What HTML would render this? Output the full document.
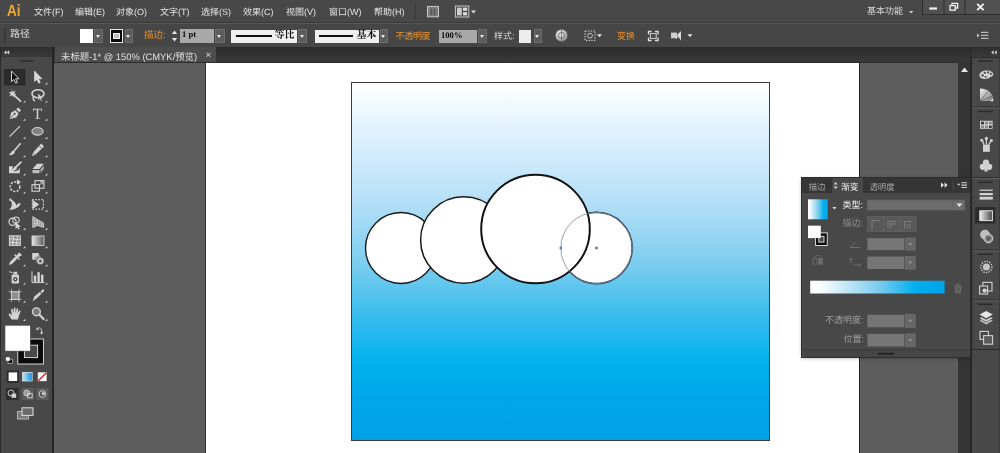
<!DOCTYPE html>
<html lang="zh-CN">
<head>
<meta charset="utf-8">
<title>Illustrator</title>
<style>
*{box-sizing:border-box;margin:0;padding:0}
html,body{width:1000px;height:453px;overflow:hidden;background:#5d5d5d}
body{position:relative;-webkit-font-smoothing:antialiased;text-rendering:geometricPrecision;font-family:"Liberation Sans","Noto Sans CJK SC",sans-serif;font-size:11px;color:#dcdcdc}
.abs{position:absolute}
#menubar,#ctrlbar,#tab,#gpanel,svg{will-change:transform}
#menubar{left:0;top:0;width:1000px;height:22px;background:#484848}
#menubar span.mi{position:absolute;top:5px;font-size:9px;line-height:14px;color:#e4e4e4;white-space:nowrap}
#ctrlbar{left:0;top:22px;width:1000px;height:25px;background:#464646;border-top:1.5px solid #3b3b3b;box-shadow:inset 0 1px 0 #555}
#tabbar{left:0;top:47px;width:1000px;height:15.6px;background:linear-gradient(#2c2c2c,#383838 90%,#262626 100%)}
#tab{left:54.5px;top:47.3px;width:161px;height:15.3px;background:#4d4d4d}
#tab span{position:absolute;left:6px;top:2px;font-size:9.4px;line-height:15px;color:#e0e0e0;white-space:nowrap}
#tab i{position:absolute;left:150.5px;top:2px;font-style:normal;font-size:10px;line-height:14px;color:#ddd}
#toolbar{left:0;top:47px;width:54.2px;height:406px;background:#484848;border-right:2.2px solid #252525}
#toolhead{left:0;top:47px;width:52px;height:10px;background:linear-gradient(#2e2e2e,#3a3a3a)}
#page{left:204.5px;top:62.5px;width:655.7px;height:391px;background:#fff;border-left:1.5px solid #323232;border-right:1.5px solid #222}
#art{left:351px;top:82px;width:419px;height:359px;border:1.5px solid #3c3c3c;background:linear-gradient(#ffffff 0%,rgb(219,240,254) 16%,rgb(181,223,247) 33%,rgb(127,206,239) 50%,rgb(52,187,238) 66.5%,rgb(3,178,238) 77.6%,rgb(0,166,232) 89%,rgb(0,161,232) 100%)}
#vscroll{left:958px;top:62px;width:12px;height:391px;background:#343434}
#dock{left:970px;top:47px;width:30px;height:406px;background:#484848;border-left:2px solid #272727;border-right:1px solid #3a3a3a}
.lbl{position:absolute;white-space:nowrap;font-size:11px;line-height:14px;color:#dcdcdc}
.or{color:#e8922e}
.dd{position:absolute;background:#5c5c5c;border:1px solid #6c6c6c}
.dd:after{content:"";position:absolute;left:50%;top:50%;margin:-1px 0 0 -2.5px;border:2.5px solid transparent;border-top:3px solid #ececec;border-bottom:0}
.inp{position:absolute;background:#a9a9a9;color:#0c0c0c;font-size:8.6px;line-height:11.5px;padding-left:2.5px;white-space:nowrap;font-weight:bold}
.wbox{position:absolute;background:#f0f0f0;color:#111;font-family:"Liberation Serif","Noto Serif CJK SC",serif;font-size:10px;line-height:12px;text-align:right;padding-right:2px;font-weight:700}
.inpd{position:absolute;background:#747474;border:1px solid #555}
#gpanel{left:802px;top:177.5px;width:168px;height:179px;background:#484848;box-shadow:0 0 0 1px #2e2e2e, 0 1px 4px rgba(0,0,0,.35)}
.pl{position:absolute;white-space:nowrap;font-size:9px;line-height:13px}
#gtabs{left:0;top:0;width:168px;height:14.5px;background:#353535}
</style>
</head>
<body>
<!-- canvas -->
<div class="abs" id="page"></div>
<div class="abs" id="art"></div>
<svg class="abs" style="left:0;top:0" width="1000" height="453" viewBox="0 0 1000 453">
  <circle cx="596.5" cy="248" r="35.7" fill="#fff" stroke="#1e2a3e" stroke-width="1.5"/>
  <circle cx="401" cy="248" r="35.5" fill="#fff" stroke="#1a1a1a" stroke-width="1.4"/>
  <circle cx="463.8" cy="240" r="43.2" fill="#fff" stroke="#1a1a1a" stroke-width="1.5"/>
  <circle cx="535.5" cy="229" r="54.3" fill="#fff" stroke="#111" stroke-width="2"/>
  <circle cx="596.5" cy="248" r="35.7" fill="none" stroke="#808a9c" stroke-width="0.8"/>
  <g fill="#5f7cab">
    <rect x="595.2" y="246.7" width="2.6" height="2.6" fill="#66758f"/>
    <rect x="559.6" y="246.7" width="2.5" height="2.6"/>
    <rect x="631" y="246.7" width="2.5" height="2.6"/>
    <rect x="595.2" y="211" width="2.6" height="2.5"/>
    <rect x="595.2" y="282.5" width="2.6" height="2.5"/>
  </g>
</svg>

<!-- top bars -->
<div class="abs" id="menubar">
  <span class="abs" style="left:7px;top:1.5px;font-size:16.5px;line-height:18px;font-weight:bold;color:#e9a838;transform:scaleX(0.82);transform-origin:0 0">Ai</span>
  <span class="mi" style="left:34px">文件(F)</span>
  <span class="mi" style="left:75px">编辑(E)</span>
  <span class="mi" style="left:116px">对象(O)</span>
  <span class="mi" style="left:160px">文字(T)</span>
  <span class="mi" style="left:201px">选择(S)</span>
  <span class="mi" style="left:243px">效果(C)</span>
  <span class="mi" style="left:286px">视图(V)</span>
  <span class="mi" style="left:329px">窗口(W)</span>
  <span class="mi" style="left:374px">帮助(H)</span>
  <div class="abs" style="left:415px;top:3px;width:1px;height:16px;background:#3a3a3a"></div>
  <svg class="abs" style="left:424px;top:4px" width="54" height="16" viewBox="0 0 54 16">
    <rect x="3.5" y="2.4" width="11" height="10.4" fill="#7c7c7c" stroke="#c6c6c6" stroke-width="1"/>
    <path d="M7.4,4.6 L7.4,11 M10.6,4.6 L10.6,11" stroke="#555" stroke-width="1.6"/>
    <rect x="31.4" y="2" width="13.4" height="11" fill="#484848" stroke="#c8c8c8" stroke-width="1"/>
    <rect x="33" y="3.6" width="4.8" height="7.8" fill="#cdcdcd"/>
    <rect x="39" y="3.6" width="4.2" height="3.2" fill="#dedede"/><rect x="39" y="8.2" width="4.2" height="3.2" fill="#dedede"/>
    <path d="M47,6.4 l5,0 l-2.5,3 z" fill="#dcdcdc"/>
  </svg>
  <span class="mi" style="left:867px;top:4px;color:#d6d6d6">基本功能</span>
  <svg class="abs" style="left:906px;top:0" width="94" height="22" viewBox="0 0 94 22">
    <path d="M3,11 l4.4,0 l-2.2,2.6 z" fill="#cfcfcf"/>
    <rect x="16.5" y="-1" width="78" height="15.5" fill="#505050" stroke="#2e2e2e" stroke-width="1"/>
    <path d="M38,0 L38,14.5 M59,0 L59,14.5" stroke="#2e2e2e" stroke-width="1"/>
    <rect x="23.4" y="7.4" width="7.6" height="2.2" fill="#f2f2f2"/>
    <rect x="44" y="5.6" width="5.2" height="4.6" fill="none" stroke="#f2f2f2" stroke-width="1.3"/>
    <path d="M46,5.2 L46,3.4 L51.6,3.4 L51.6,8 L49.8,8" fill="none" stroke="#f2f2f2" stroke-width="1.3"/>
    <path d="M71.2,3.8 L77.6,10.2 M77.6,3.8 L71.2,10.2" stroke="#f4f4f4" stroke-width="1.9"/>
  </svg>
</div>
<div class="abs" id="ctrlbar">
  <div class="abs" style="left:4px;top:5px;width:2px;height:15px;background:#3a3a3a"></div>
  <span class="lbl" style="left:10px;top:5px;font-size:10px">路径</span>
  <div class="abs" style="left:80px;top:6px;width:12.5px;height:13.5px;background:#fff"></div>
  <div class="dd" style="left:94px;top:6px;width:9px;height:14px"></div>
  <div class="abs" style="left:109.5px;top:6px;width:13.5px;height:13.5px;background:#ddd;border:1px solid #e8e8e8"></div>
  <div class="abs" style="left:110.5px;top:7px;width:11.5px;height:11.5px;background:#ddd;border:3px solid #0a0a0a"></div>
  <div class="abs" style="left:113px;top:9.5px;width:6.5px;height:6.5px;border:1px solid #f2f2f2;background:#bdbdbd"></div>
  <div class="dd" style="left:124.5px;top:6px;width:8.5px;height:14px"></div>
  <span class="lbl or" style="left:144px;top:6px;font-size:9.5px">描边:</span>
  <svg class="abs" style="left:171px;top:6px" width="7" height="14" viewBox="0 0 7 14"><path d="M0.8,5 l5.4,0 l-2.7,-3.4 z M0.8,9 l5.4,0 l-2.7,3.4 z" fill="#e4e4e4"/></svg>
  <div class="inp" style="left:179.5px;top:5.5px;width:34px;height:14px;font-family:'Liberation Serif','Noto Serif CJK SC',serif">1 pt</div>
  <div class="dd" style="left:215px;top:5.5px;width:9.5px;height:14px"></div>
  <div class="wbox" style="left:231px;top:6.5px;width:65.5px;height:13px">等比</div>
  <div class="abs" style="left:235.5px;top:12px;width:36px;height:1.6px;background:#111"></div>
  <div class="dd" style="left:298px;top:6px;width:8.5px;height:14px"></div>
  <div class="wbox" style="left:314.5px;top:6.5px;width:64px;height:13px">基本</div>
  <div class="abs" style="left:318.5px;top:12px;width:34px;height:1.6px;background:#111"></div>
  <div class="dd" style="left:379.5px;top:6px;width:8.5px;height:14px"></div>
  <span class="lbl or" style="left:395.5px;top:6px;font-size:9px;letter-spacing:-0.3px">不透明度</span>
  <div class="inp" style="left:438.5px;top:6.5px;width:38px;height:13px;font-family:'Liberation Serif','Noto Serif CJK SC',serif">100%</div>
  <div class="dd" style="left:478px;top:6px;width:8.5px;height:14px"></div>
  <span class="lbl" style="left:494px;top:6px;font-size:9px">样式:</span>
  <div class="abs" style="left:519px;top:6.5px;width:12px;height:13px;background:#ececec"></div>
  <div class="dd" style="left:533.5px;top:6px;width:8px;height:14px"></div>
  <svg class="abs" style="left:550px;top:3px" width="150" height="20" viewBox="0 0 150 20">
    <defs><radialGradient id="gl" cx="0.4" cy="0.35" r="0.7"><stop offset="0" stop-color="#f4f4f4"/><stop offset="0.6" stop-color="#bdbdbd"/><stop offset="1" stop-color="#8a8a8a"/></radialGradient></defs>
    <circle cx="11.5" cy="9.4" r="6" fill="url(#gl)"/>
    <circle cx="11.5" cy="9.4" r="3" fill="none" stroke="#6a6a6a" stroke-width="1"/>
    <path d="M11.5,4 L11.5,14.6" stroke="#6a6a6a" stroke-width="0.8"/>
    <rect x="35" y="5" width="10" height="9.4" fill="none" stroke="#d4d4d4" stroke-width="1" stroke-dasharray="1.5 1.2"/>
    <circle cx="40" cy="9.7" r="2.4" fill="none" stroke="#d4d4d4" stroke-width="0.9"/>
    <path d="M47,8.2 l5,0 l-2.5,3 z" fill="#e4e4e4"/>
    <path d="M98.5,8.5 L98.5,5.5 L101.5,5.5 M105,5.5 L108,5.5 L108,8.5 M108,11.5 L108,14.5 L105,14.5 M101.5,14.5 L98.5,14.5 L98.5,11.5" fill="none" stroke="#e0e0e0" stroke-width="1.3"/>
    <rect x="100.4" y="7.6" width="5.8" height="4.8" fill="none" stroke="#cfcfcf" stroke-width="1"/>
    <rect x="121" y="6.6" width="6" height="5.6" fill="#cfcfcf"/>
    <path d="M127,9 L131,5 L131,14.6 Z" fill="#dcdcdc"/><path d="M126,13 L130,8" stroke="#e8e8e8" stroke-width="0.8"/>
    <path d="M137.5,8.2 l5,0 l-2.5,3 z" fill="#e4e4e4"/>
  </svg>
  <span class="lbl or" style="left:617px;top:6px;font-size:9px">变换</span>
  <svg class="abs" style="left:975px;top:6px" width="16" height="14" viewBox="0 0 16 14">
    <path d="M2,4.4 l2.6,2 l-2.6,2 z" fill="#c4c4c4"/>
    <path d="M6,3.4 L13.4,3.4 M6,6.4 L13.4,6.4 M6,9.4 L13.4,9.4" stroke="#bcbcbc" stroke-width="1.1"/>
  </svg>
</div>
<div class="abs" id="tabbar"></div>
<div class="abs" id="tab"><span>未标题-1* @ 150% (CMYK/预览)</span><i>×</i></div>

<!-- left tools -->
<div class="abs" id="toolbar"></div>
<div class="abs" id="toolhead"></div>
<svg class="abs" style="left:0;top:0" width="60" height="453" viewBox="0 0 60 453">
<rect x="19.5" y="60.3" width="14" height="1.3" fill="#2a2a2a"/>
<path d="M4,52.4 l2.4,-2.2 l0,4.4 z M6.8,52.4 l2.4,-2.2 l0,4.4 z" fill="#e4e4e4"/>
<rect x="0" y="47" width="1" height="406" fill="#2a2a2a"/>
<rect x="4.5" y="69.5" width="20.5" height="15.5" fill="#2b2b2b" stroke="#222" stroke-width="0.6"/>
<g transform="translate(15 77)"><path d="M-3.5,-6 L-3.5,4.6 L-1.1,2.4 L0.7,6.2 L2.3,5.5 L0.6,1.8 L4,1.8 Z" fill="#0a0a0a" stroke="#e8e8e8" stroke-width="0.9"/></g>
<g transform="translate(38 77)"><path d="M-3.5,-6 L-3.5,4.6 L-1.1,2.4 L0.7,6.2 L2.3,5.5 L0.6,1.8 L4,1.8 Z" fill="#d8d8d8" stroke="#efefef" stroke-width="0.5"/></g>
<g transform="translate(15 95.2)"><path d="M-0.5,0.5 L5.5,6" stroke="#d4d4d4" stroke-width="1.8" stroke-linecap="round"/><path d="M-3,-6 L-2.2,-3.3 L0.8,-4.5 L-0.8,-2 L1.5,-0.5 L-1.3,-0.2 L-1.5,2.5 L-3,0 L-5.8,1.2 L-4.2,-1.3 L-6.3,-3 L-3.5,-3.2 Z" fill="#d4d4d4"/></g>
<g transform="translate(38 95.2)"><ellipse cx="0" cy="-1.5" rx="6" ry="4" fill="none" stroke="#d4d4d4" stroke-width="1.6"/><path d="M-4.5,1 C-5.5,3 -4.5,5 -3,6" fill="none" stroke="#d4d4d4" stroke-width="1.3"/><path d="M0,-2 L0,5.2 L1.8,3.6 L3,6 L4.2,5.4 L3,3.2 L5.2,3 Z" fill="#d4d4d4" stroke="#484848" stroke-width="0.4"/></g>
<g transform="translate(15 113.4)"><path d="M-5.5,5.5 L-3.8,-0.8 L0.5,-3.2 L3.6,0 L1.2,4 Z" fill="#d4d4d4"/><path d="M1.2,-4.2 L3.2,-6 L6,-3.2 L4.3,-1.2 Z" fill="#d4d4d4"/><path d="M-5,5 L-0.8,0.8" stroke="#484848" stroke-width="0.8"/><circle cx="-0.3" cy="0.3" r="1" fill="#484848"/></g>
<text x="37.5" y="118.60000000000001" font-family="Liberation Serif,serif" font-size="15.5" fill="#d4d4d4" text-anchor="middle">T</text>
<g transform="translate(15 131.6)"><path d="M-5.5,5 L5,-5.5" stroke="#d4d4d4" stroke-width="1.3"/></g>
<g transform="translate(38 131.6)"><ellipse cx="-0.5" cy="-0.3" rx="5.6" ry="3.8" fill="#838383" stroke="#d4d4d4" stroke-width="1.1"/></g>
<g transform="translate(15 149.8)"><path d="M5.2,-6 L-1.2,1.5" stroke="#d4d4d4" stroke-width="1.6" stroke-linecap="round"/><path d="M-1.8,0.6 L0,2.3 C-1.5,5.2 -4,5.6 -6.2,5.2 C-4.4,4 -4.2,1.6 -1.8,0.6 Z" fill="#d4d4d4"/></g>
<g transform="translate(38 149.8)"><path d="M3.2,-6.2 L6,-3.4 L-2.6,5 L-6,6.2 L-4.9,2.6 Z" fill="#d4d4d4"/><path d="M1.2,-4 L3.8,-1.3" stroke="#484848" stroke-width="0.8"/><path d="M-4.9,2.6 L-2.6,5" stroke="#484848" stroke-width="0.6"/></g>
<g transform="translate(15 168)"><path d="M6,-5.8 L0.5,-0.5" stroke="#d4d4d4" stroke-width="1.8" stroke-linecap="round"/><path d="M0,-1.5 L1.8,0.2 C0.8,2.6 -1.5,3.2 -3.4,2.6 C-2,1.8 -1.6,-0.6 0,-1.5 Z" fill="#d4d4d4"/><path d="M-6,-1.8 L-2,-1.8 L-2.5,1 L-1,3.5 L3.5,2 L4.8,-0.5 L4.8,5.2 L-6,5.2 Z" fill="#d4d4d4"/></g>
<g transform="translate(38 168)"><path d="M-5.5,1 L-1,-4.2 L5.8,-4.2 L1.5,1 Z" fill="#d4d4d4"/><path d="M-5.5,2 L1.5,2 L1.5,5.2 L-5.5,5.2 Z" fill="#bdbdbd"/><path d="M2.5,1.6 L5.8,-2.6 L5.8,1 L2.5,5 Z" fill="#a8a8a8"/></g>
<g transform="translate(15 186.2)"><circle cx="0" cy="0.5" r="4.8" fill="none" stroke="#d4d4d4" stroke-width="1.5" stroke-dasharray="2.2 1.3"/><path d="M2,-6.8 L6,-4.2 L1.8,-2.2 Z" fill="#d4d4d4"/></g>
<g transform="translate(38 186.2)"><rect x="-6" y="-1.5" width="7.5" height="6.5" fill="none" stroke="#d4d4d4" stroke-width="1.1"/><rect x="-3" y="-5.6" width="9" height="7.6" fill="none" stroke="#d4d4d4" stroke-width="1.1"/><path d="M1.2,-0.8 L4.6,-4.2 M2,-4.4 L4.8,-4.4 L4.8,-1.6" stroke="#d4d4d4" stroke-width="1" fill="none"/></g>
<g transform="translate(15 204.4)"><path d="M-5.8,5 C-2.5,3 -2.5,-1 -4.8,-4.8 C-1,-3.8 1,-1 1.4,1.2 C2.5,-1 4,-1.4 6,-1 C4.4,0.6 4.2,3 1.4,3.4 C-0.8,5.4 -3.4,5.6 -5.8,5 Z" fill="#d4d4d4"/><circle cx="-4.6" cy="-4.6" r="1.2" fill="#d4d4d4"/></g>
<g transform="translate(38 204.4)"><rect x="-5.6" y="-4.8" width="11" height="9.6" fill="none" stroke="#d4d4d4" stroke-width="1.2" stroke-dasharray="1.6 1.4"/><path d="M-5.4,-4.4 L1.2,0.2 L-5.4,4.6 Z" fill="#d4d4d4"/></g>
<g transform="translate(15 222.6)"><circle cx="-2.4" cy="-0.8" r="3.6" fill="none" stroke="#d4d4d4" stroke-width="1.2"/><circle cx="1" cy="-2.4" r="3.2" fill="none" stroke="#d4d4d4" stroke-width="1.1"/><path d="M0.5,-0.5 L0.5,6.4 L2.3,4.8 L3.4,7 L4.6,6.4 L3.5,4.3 L5.8,4.1 Z" fill="#d4d4d4"/></g>
<g transform="translate(38 222.6)"><path d="M-5.2,-6 L-5.2,5 L-0.5,2.8 L-0.5,-3 Z M-0.5,-3 L5.6,0.4 L5.6,4.8 L-0.5,2.8 Z" fill="#8a8a8a" stroke="#d4d4d4" stroke-width="0.9"/><path d="M-3.6,-5 L-3.6,4.2 M-2,-4 L-2,3.5 M-5.2,-2.5 L-0.5,-0.8 M-5.2,1 L-0.5,1 M1.6,-1.6 L1.6,3.4 M3.6,-0.6 L3.6,4 M-0.5,0 L5.6,2.4" stroke="#d4d4d4" stroke-width="0.6"/></g>
<g transform="translate(15 240.8)"><rect x="-5.6" y="-5" width="11" height="9.6" fill="#8e8e8e" stroke="#d4d4d4" stroke-width="1"/><path d="M-5.6,-1.5 C-2,-3.5 2,0.5 5.4,-1.8 M-5.6,2 C-2,0 2,4 5.4,1.4 M-2.2,-5 C-0.4,-2 -3.6,1.6 -1.8,4.6 M2,-5 C3.6,-2 0.4,1.6 2.2,4.6" fill="none" stroke="#eee" stroke-width="0.8"/></g>
<defs><linearGradient id="tg" x1="0" x2="1" y1="0" y2="0"><stop offset="0" stop-color="#e6e6e6"/><stop offset="1" stop-color="#5a5a5a"/></linearGradient></defs>
<g transform="translate(38 240.8)"><rect x="-6" y="-4.8" width="12" height="9.4" fill="url(#tg)" stroke="#d4d4d4" stroke-width="0.9"/></g>
<g transform="translate(15 259)"><path d="M-6,6 L-5,3 L0.2,-2.2 L2.2,-0.2 L-3,5 Z" fill="#d4d4d4"/><path d="M0,-4 L4,0 M1.8,-2 L4.2,-5.6 L5.8,-4 Z" stroke="#d4d4d4" stroke-width="1.6" stroke-linecap="round" fill="#d4d4d4"/></g>
<g transform="translate(38 259)"><rect x="-5.8" y="-6" width="6.6" height="6.6" fill="#d4d4d4"/><path d="M-3.4,-1.6 L2,-4 L4,4.4 L-1,4.6 Z" fill="#9a9a9a"/><circle cx="2.4" cy="2" r="3.6" fill="#d4d4d4" stroke="#484848" stroke-width="0.6"/><circle cx="2.4" cy="2" r="1.5" fill="#555"/></g>
<g transform="translate(15 277.2)"><rect x="-3.4" y="-2.6" width="7.4" height="8.8" rx="1" fill="#d4d4d4"/><rect x="-1.6" y="-5.4" width="3.8" height="2.6" fill="#d4d4d4"/><circle cx="0.3" cy="2" r="2.2" fill="#484848"/><circle cx="0.3" cy="2" r="0.9" fill="#d4d4d4"/><path d="M-5.8,-5.6 L-2.6,-4.4" stroke="#d4d4d4" stroke-width="1"/></g>
<g transform="translate(38 277.2)"><path d="M-6,-6 L-6,5.4 L6.4,5.4" fill="none" stroke="#d4d4d4" stroke-width="1"/><rect x="-4.2" y="-1.6" width="2.4" height="6.4" fill="#d4d4d4"/><rect x="-0.6" y="-5" width="2.4" height="9.8" fill="#d4d4d4"/><rect x="3" y="-2.6" width="2.4" height="7.4" fill="#d4d4d4"/></g>
<g transform="translate(15 295.4)"><rect x="-3.6" y="-3.6" width="7.6" height="7.6" fill="#8c8c8c" stroke="#d4d4d4" stroke-width="0.8"/><path d="M-6.4,-3.6 L6.6,-3.6 M-6.4,4 L6.6,4 M-3.6,-6.4 L-3.6,6.6 M4,-6.4 L4,6.6" stroke="#d4d4d4" stroke-width="0.7"/></g>
<g transform="translate(38 295.4)"><path d="M-5.6,5.8 L-3.4,0.8 L1.8,-3.4 L3.4,-1.6 L-1.4,3 Z" fill="#d4d4d4"/><path d="M2.4,-4 L5.2,-6.4 L6.4,-5 L4,-2.2 Z" fill="#d4d4d4"/></g>
<g transform="translate(15 313.6)"><path d="M-3.4,6 L-6.2,1.4 C-6.8,0.2 -5.2,-0.6 -4.4,0.6 L-3.2,2 L-3.8,-3.6 C-3.9,-4.8 -2.3,-5 -2.1,-3.8 L-1.5,-0.4 L-1.2,-5.2 C-1.1,-6.4 0.5,-6.3 0.5,-5.1 L0.5,-0.6 L1.6,-4.6 C1.9,-5.7 3.4,-5.3 3.2,-4.2 L2.5,0 L4,-2.6 C4.6,-3.6 5.9,-2.9 5.5,-1.9 L3.6,3 L3,6 Z" fill="#d4d4d4"/></g>
<g transform="translate(38 313.6)"><circle cx="-1.6" cy="-1.8" r="3.9" fill="#7a7a7a" stroke="#d4d4d4" stroke-width="1.4"/><path d="M1.4,1.2 L5.6,5.4" stroke="#d4d4d4" stroke-width="2.2" stroke-linecap="round"/></g>
<path d="M47.3,82.2 l0,2.2 l-2.2,0 z" fill="#d8d8d8"/><path d="M25.3,100.4 l0,2.2 l-2.2,0 z" fill="#d8d8d8"/><path d="M47.3,100.4 l0,2.2 l-2.2,0 z" fill="#d8d8d8"/><path d="M25.3,118.60000000000001 l0,2.2 l-2.2,0 z" fill="#d8d8d8"/><path d="M47.3,118.60000000000001 l0,2.2 l-2.2,0 z" fill="#d8d8d8"/><path d="M25.3,136.79999999999998 l0,2.2 l-2.2,0 z" fill="#d8d8d8"/><path d="M47.3,136.79999999999998 l0,2.2 l-2.2,0 z" fill="#d8d8d8"/><path d="M25.3,155.0 l0,2.2 l-2.2,0 z" fill="#d8d8d8"/><path d="M47.3,155.0 l0,2.2 l-2.2,0 z" fill="#d8d8d8"/><path d="M25.3,173.2 l0,2.2 l-2.2,0 z" fill="#d8d8d8"/><path d="M47.3,173.2 l0,2.2 l-2.2,0 z" fill="#d8d8d8"/><path d="M25.3,191.39999999999998 l0,2.2 l-2.2,0 z" fill="#d8d8d8"/><path d="M47.3,191.39999999999998 l0,2.2 l-2.2,0 z" fill="#d8d8d8"/><path d="M25.3,209.6 l0,2.2 l-2.2,0 z" fill="#d8d8d8"/><path d="M47.3,209.6 l0,2.2 l-2.2,0 z" fill="#d8d8d8"/><path d="M25.3,227.79999999999998 l0,2.2 l-2.2,0 z" fill="#d8d8d8"/><path d="M47.3,227.79999999999998 l0,2.2 l-2.2,0 z" fill="#d8d8d8"/><path d="M25.3,246.0 l0,2.2 l-2.2,0 z" fill="#d8d8d8"/><path d="M47.3,246.0 l0,2.2 l-2.2,0 z" fill="#d8d8d8"/><path d="M25.3,264.2 l0,2.2 l-2.2,0 z" fill="#d8d8d8"/><path d="M47.3,264.2 l0,2.2 l-2.2,0 z" fill="#d8d8d8"/><path d="M25.3,282.4 l0,2.2 l-2.2,0 z" fill="#d8d8d8"/><path d="M47.3,282.4 l0,2.2 l-2.2,0 z" fill="#d8d8d8"/><path d="M25.3,300.59999999999997 l0,2.2 l-2.2,0 z" fill="#d8d8d8"/><path d="M47.3,300.59999999999997 l0,2.2 l-2.2,0 z" fill="#d8d8d8"/><path d="M25.3,318.8 l0,2.2 l-2.2,0 z" fill="#d8d8d8"/><path d="M47.3,318.8 l0,2.2 l-2.2,0 z" fill="#d8d8d8"/>
<rect x="17.8" y="339" width="25.6" height="25" fill="#0a0a0a" stroke="#e6e6e6" stroke-width="0.9"/>
<rect x="24.4" y="345.2" width="13.2" height="12.4" fill="#484848" stroke="#e6e6e6" stroke-width="0.9"/>
<rect x="5" y="325.3" width="25.3" height="25.8" fill="#ffffff" stroke="#3a3a3a" stroke-width="0.5"/>
<path d="M37.2,329.5 C37.2,327.5 40.8,327.2 41.6,329.6 L41.6,332.8" fill="none" stroke="#cfcfcf" stroke-width="1"/><path d="M35.8,329.8 l1.5,-2.6 l1.5,2.6 z M40,332.2 l1.6,2.6 l1.6,-2.6 z" fill="#cfcfcf"/>
<rect x="8" y="359.2" width="4.4" height="4.2" fill="#111" stroke="#ddd" stroke-width="0.6"/><rect x="5.8" y="357" width="4.2" height="4" fill="#fff" stroke="#333" stroke-width="0.4"/>
<rect x="6.5" y="370.5" width="12.5" height="12.5" fill="#2e2e2e"/>
<rect x="8.6" y="372.4" width="8.6" height="8.6" fill="#fff"/>
<defs><linearGradient id="tg2" x1="0" x2="1"><stop offset="0" stop-color="#bfe6fa"/><stop offset="1" stop-color="#0a8fdc"/></linearGradient></defs>
<rect x="22.6" y="372.4" width="9.6" height="8.6" fill="url(#tg2)" stroke="#e8e8e8" stroke-width="0.7"/>
<rect x="38" y="372.4" width="8.6" height="8.6" fill="#fff" stroke="#c9c9c9" stroke-width="0.5"/><path d="M38.3,380.7 L46.3,372.7" stroke="#d8251c" stroke-width="1.4"/>
<rect x="6" y="388" width="12.4" height="12" fill="#2e2e2e"/>
<rect x="21.6" y="388" width="12.4" height="12" fill="#5c5c5c"/>
<rect x="36.2" y="388" width="12.2" height="12" fill="#5c5c5c"/>
<circle cx="11" cy="393" r="3" fill="none" stroke="#c8c8c8" stroke-width="1"/><rect x="11.6" y="393.6" width="4.6" height="4.2" fill="#d4d4d4"/>
<circle cx="26.8" cy="393" r="3" fill="#9a9a9a" stroke="#c8c8c8" stroke-width="1"/><rect x="27.6" y="393.6" width="4.6" height="4.2" fill="none" stroke="#d4d4d4" stroke-width="0.9"/>
<circle cx="42.4" cy="394" r="3.4" fill="none" stroke="#c8c8c8" stroke-width="1"/><circle cx="43.4" cy="393.4" r="1.5" fill="#d4d4d4"/>
<rect x="17.4" y="411.6" width="11" height="7.4" fill="#7a7a7a" stroke="#cfcfcf" stroke-width="0.8"/>
<rect x="22" y="407.8" width="11" height="7.6" fill="#6a6a6a" stroke="#e0e0e0" stroke-width="1"/>
</svg>

<!-- right -->
<div class="abs" id="vscroll"></div>
<svg class="abs" style="left:958px;top:62px" width="13" height="14" viewBox="0 0 13 14"><path d="M3,10 l7,0 l-3.5,-4.4 z" fill="#e6e6e6"/></svg>
<div class="abs" id="dock"></div>
<div class="abs" style="left:971px;top:47px;width:29px;height:10px;background:linear-gradient(#2e2e2e,#3a3a3a)"></div>
<svg class="abs" style="left:971px;top:47px" width="29" height="310" viewBox="971 47 29 310">
  <path d="M993.6,50.2 l0,4.4 l-2.4,-2.2 z M996.8,50.2 l0,4.4 l-2.4,-2.2 z" fill="#d8d8d8"/>
  <g stroke="#2c2c2c" stroke-width="1">
    <path d="M972,57.5 L1000,57.5 M972,107 L1000,107 M972,177.5 L1000,177.5 M972,250 L1000,250 M972,300 L1000,300 M972,349.5 L1000,349.5"/>
  </g>
  <g stroke="#5e5e5e" stroke-width="1"><path d="M972,108 L1000,108 M972,178.5 L1000,178.5 M972,251 L1000,251 M972,301 L1000,301"/></g>
  <g fill="#2a2a2a">
    <rect x="978" y="60.3" width="15" height="1.4"/><rect x="978" y="110.8" width="15" height="1.4"/><rect x="978" y="181.6" width="15" height="1.4"/><rect x="978" y="253.6" width="15" height="1.4"/><rect x="978" y="303.6" width="15" height="1.4"/>
  </g>
  <!-- color palette -->
  <path d="M979.4,75.4 C979.4,72 983,70.4 987,70.4 C991,70.4 993.4,72.2 993.2,74.6 C993,77 990.6,76.4 989.6,77.6 C988.6,78.8 986.6,79.2 984.4,79 C981.4,78.8 979.4,77.6 979.4,75.4 Z" fill="#d2d2d2"/>
  <g fill="#484848"><circle cx="982.6" cy="75.4" r="1.2"/><circle cx="984.8" cy="72.8" r="1.1"/><circle cx="988" cy="72.4" r="1.1"/><circle cx="990.8" cy="73.8" r="1.1"/><circle cx="985.6" cy="77" r="1"/></g>
  <!-- color guide -->
  <defs><linearGradient id="cg" x1="0" y1="0" x2="1" y2="1"><stop offset="0" stop-color="#f0f0f0"/><stop offset="1" stop-color="#777"/></linearGradient></defs>
  <path d="M980,88.4 C988,88.6 993.6,93.6 993.8,101 L980,101 Z" fill="url(#cg)"/>
  <path d="M980,101 L988,91.4 M980,101 L992.6,96" stroke="#5a5a5a" stroke-width="0.7"/>
  <path d="M993,98.4 l0,2.8 l-2.8,0 z" fill="#eee"/>
  <!-- swatches -->
  <rect x="980" y="120.8" width="12.6" height="8" fill="#cfcfcf"/>
  <g fill="#3a3a3a"><rect x="981" y="121.8" width="3" height="2.6"/><rect x="989" y="125.6" width="2.8" height="2.4"/></g>
  <g fill="#8a8a8a"><rect x="985" y="121.8" width="3" height="2.6"/><rect x="989" y="121.8" width="2.8" height="2.6"/><rect x="981" y="125.6" width="3" height="2.4"/><rect x="985" y="125.6" width="3" height="2.4"/></g>
  <!-- brushes -->
  <rect x="983" y="144.6" width="6.8" height="7.2" fill="#d2d2d2"/>
  <path d="M986.4,144.6 L986.4,138 M984,144.6 L982,140 M988.8,144.6 L991.4,140.4" stroke="#d2d2d2" stroke-width="1.3"/>
  <circle cx="986.4" cy="138.4" r="1.6" fill="#d2d2d2"/><circle cx="981.8" cy="140.2" r="1.5" fill="#d2d2d2"/><circle cx="991.4" cy="140.6" r="1.5" fill="#d2d2d2"/>
  <!-- symbols (club) -->
  <g fill="#d2d2d2"><circle cx="986" cy="162.6" r="3.1"/><circle cx="982.8" cy="166.8" r="3.1"/><circle cx="989.2" cy="166.8" r="3.1"/><path d="M985.2,166 L986.8,166 L987.8,171.4 L984.2,171.4 Z"/></g>
  <!-- stroke -->
  <g fill="#d2d2d2"><rect x="979.6" y="189.6" width="13.2" height="1.2"/><rect x="979.6" y="193" width="13.2" height="2.2"/><rect x="979.6" y="196.8" width="13.2" height="2.8"/></g>
  <!-- gradient (active) -->
  <rect x="975" y="207" width="20.4" height="16.6" fill="#2d2d2d"/>
  <defs><linearGradient id="dg" x1="0" x2="1"><stop offset="0" stop-color="#efefef"/><stop offset="1" stop-color="#484848"/></linearGradient></defs>
  <rect x="979.8" y="210.8" width="12.6" height="9.8" fill="url(#dg)" stroke="#e4e4e4" stroke-width="1"/>
  <!-- transparency -->
  <circle cx="985" cy="234.6" r="4.4" fill="#bdbdbd" stroke="#e0e0e0" stroke-width="0.8"/>
  <circle cx="988.4" cy="238.4" r="4.4" fill="#8c8c8c" stroke="#e0e0e0" stroke-width="0.9"/>
  <circle cx="988.4" cy="238.4" r="2" fill="#5a5a5a"/>
  <!-- appearance -->
  <circle cx="986.4" cy="267" r="5.6" fill="none" stroke="#d2d2d2" stroke-width="1.2" stroke-dasharray="1.4 1.2"/>
  <circle cx="986.4" cy="267" r="3.6" fill="#c4c4c4"/>
  <!-- graphic styles -->
  <rect x="983" y="282.4" width="9" height="8.6" fill="none" stroke="#d2d2d2" stroke-width="1.1"/>
  <rect x="979.6" y="286" width="8" height="8" fill="#484848" stroke="#d2d2d2" stroke-width="1.1"/>
  <circle cx="984.6" cy="290.6" r="2.2" fill="#d2d2d2"/>
  <!-- layers -->
  <path d="M986.2,311 L992.8,314.6 L986.2,318.2 L979.6,314.6 Z" fill="#e6e6e6"/>
  <path d="M979.6,318.2 L986.2,321.8 L992.8,318.2 L991,317.2 L986.2,319.8 L981.4,317.2 Z" fill="#d0d0d0"/>
  <path d="M979.6,320.8 L986.2,324.4 L992.8,320.8 L991,319.8 L986.2,322.4 L981.4,319.8 Z" fill="#bdbdbd"/>
  <!-- artboards -->
  <rect x="980" y="331.4" width="8.4" height="8" fill="none" stroke="#d2d2d2" stroke-width="1.1"/>
  <rect x="983.6" y="335.6" width="9" height="8.6" fill="#5a5a5a" stroke="#d2d2d2" stroke-width="1.1"/>
</svg>

<!-- gradient panel -->
<div class="abs" id="gpanel">
  <div class="abs" id="gtabs"></div>
  <div class="abs" style="left:29.5px;top:0;width:31px;height:15px;background:#484848"></div>
  <span class="pl" style="left:6.5px;top:3px;color:#a2a2a2;font-size:8.6px">描边</span>
  <span class="pl" style="left:39px;top:3px;color:#f4f4f4;font-size:8.8px">渐变</span>
  <span class="pl" style="left:67.5px;top:3px;color:#a2a2a2;font-size:8.4px">透明度</span>
  <svg class="abs" style="left:0;top:0" width="168" height="180" viewBox="802 177.5 168 180">
    <path d="M835.6,181.6 l2,2.4 l-4,0 z M835.6,188.4 l2,-2.4 l-4,0 z" fill="#d8d8d8"/>
    <path d="M941,182 l3,2.6 l-3,2.6 z M944.6,182 l3,2.6 l-3,2.6 z" fill="#e8e8e8"/>
    <path d="M953,180 L953,190" stroke="#5c5c5c" stroke-width="1" stroke-dasharray="1 1"/>
    <path d="M957,183.2 l3.4,0 l-1.7,2 z" fill="#d8d8d8"/>
    <path d="M961.4,182.2 L967,182.2 M961.4,184.6 L967,184.6 M961.4,187 L967,187" stroke="#d0d0d0" stroke-width="1.1"/>
    <defs><linearGradient id="pg" x1="0" x2="1"><stop offset="0" stop-color="#ffffff"/><stop offset="0.06" stop-color="#ffffff"/><stop offset="0.5" stop-color="#7fcef0"/><stop offset="0.78" stop-color="#04b0ee"/><stop offset="1" stop-color="#00a2e8"/></linearGradient></defs>
    <rect x="808" y="198.8" width="19.8" height="20" fill="url(#pg)"/>
    <path d="M832.4,206.6 l4,0 l-2,2.4 z" fill="#e0e0e0"/>
    <!-- type dropdown -->
    <rect x="867" y="199.4" width="98" height="10.4" fill="#6c6c6c" stroke="#585858" stroke-width="0.8"/>
    <path d="M952.6,200.4 L952.6,208.8" stroke="#5a5a5a" stroke-width="0.8" stroke-dasharray="1 1"/>
    <path d="M956.4,203 l6,0 l-3,3.6 z" fill="#e8e8e8"/>
    <!-- stroke buttons -->
    <g fill="#585858" stroke="#666" stroke-width="0.7"><rect x="867.5" y="216" width="16" height="15"/><rect x="883.8" y="216" width="16" height="15"/><rect x="900.1" y="216" width="16" height="15"/></g>
    <g fill="none" stroke="#7a7a7a" stroke-width="1.2"><path d="M872,228 L872,220 L880,220"/><path d="M888,228 L888,221 L896,221 M890.6,228 L890.6,223.4 L896,223.4"/><path d="M904.4,228 L904.4,221 L912.4,221 M907,228 L907,223.6 M909.8,228 L909.8,223.6"/></g>
    <!-- fill / stroke small -->
    <rect x="815.6" y="232.4" width="11.6" height="12.6" fill="#0a0a0a" stroke="#ececec" stroke-width="0.9"/>
    <rect x="818.8" y="235.8" width="5.2" height="5.8" fill="#484848" stroke="#ececec" stroke-width="0.9"/>
    <rect x="808" y="225.2" width="12.8" height="12.4" fill="#fff"/>
    <!-- angle / aspect icons -->
    <path d="M850,247 L860,247 M850,247 L856.4,241" stroke="#6e6e6e" stroke-width="1" fill="none"/>
    <path d="M851,264.4 L851,258 M849,260 L851,257.6 L853,260 M854,264.4 L860.4,264.4 M858.4,262.4 L860.8,264.4 L858.4,266.4" stroke="#6e6e6e" stroke-width="0.9" fill="none"/>
    <g fill="#757575"><rect x="867.3" y="237.6" width="37" height="12"/><rect x="867.3" y="256" width="37" height="12.6"/><rect x="867.3" y="314.2" width="37" height="12.6"/><rect x="867.3" y="333.4" width="37" height="12.6"/></g>
    <g fill="#666" stroke="#787878" stroke-width="0.6"><rect x="905.4" y="237.6" width="9.8" height="12"/><rect x="905.4" y="256" width="9.8" height="12.6"/><rect x="905.4" y="314.2" width="9.8" height="12.6"/><rect x="905.4" y="333.4" width="9.8" height="12.6"/></g>
    <g fill="#8e8e8e"><path d="M908,242.4 l4.6,0 l-2.3,2.8 z"/><path d="M908,261 l4.6,0 l-2.3,2.8 z"/><path d="M908,319.2 l4.6,0 l-2.3,2.8 z"/><path d="M908,338.4 l4.6,0 l-2.3,2.8 z"/></g>
    <!-- reverse icon -->
    <g stroke="#6c6c6c" stroke-width="0.9" fill="none"><rect x="813" y="258" width="4" height="5.6"/><rect x="818.4" y="258" width="4" height="5.6" fill="#6c6c6c"/><path d="M814,256.4 C816,254.6 819.6,254.6 821.4,256.4"/></g>
    <!-- gradient bar -->
    <rect x="810.2" y="280.2" width="134.4" height="12.8" fill="url(#pg)"/>
    <!-- trash -->
    <g fill="none" stroke="#6c6c6c" stroke-width="1"><path d="M954.4,285.4 L961.8,285.4 M956.6,285.2 L956.6,283.6 L959.6,283.6 L959.6,285.2"/><path d="M955.2,286.6 L955.8,292.4 L960.4,292.4 L961,286.6 Z" fill="#5e5e5e"/></g>
    <!-- bottom strip -->
    <rect x="802" y="349.4" width="168" height="7" fill="#454545"/>
    <path d="M802,349.4 L970,349.4" stroke="#3a3a3a" stroke-width="0.8"/>
    <rect x="878" y="352.4" width="16" height="1.6" fill="#1e1e1e"/>
  </svg>
  <span class="pl" style="left:40.5px;top:20.5px;color:#f0f0f0">类型:</span>
  <span class="pl" style="left:40.5px;top:39px;color:#8e8e8e">描边:</span>
  <span class="pl" style="left:23px;top:136px;color:#9c9c9c">不透明度:</span>
  <span class="pl" style="left:41.5px;top:155px;color:#9c9c9c">位置:</span>
</div>
</body>
</html>
